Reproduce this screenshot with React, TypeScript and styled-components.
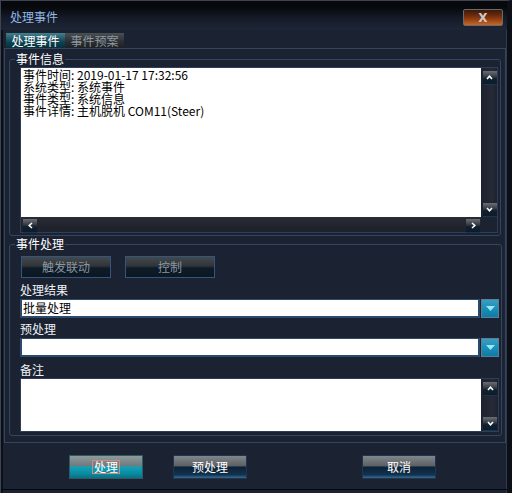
import React from "react";
import styled, { createGlobalStyle, css } from "styled-components";

const GlobalStyle = createGlobalStyle`
  html, body {
    margin: 0;
    padding: 0;
    background: #0b0e15;
  }
  * {
    box-sizing: border-box;
  }
`;

const FONT = `"Noto Sans CJK SC", "Liberation Sans", sans-serif`;

// 窗口外框
const Window = styled.div`
  width: 512px;
  height: 493px;
  display: flex;
  flex-direction: column;
  background: #1b2231;
  border-top: 1px solid #3c4456;
  border-left: 1px solid #3c4456;
  border-right: 5px solid #0c0f16;
  box-shadow: inset 2px 0 0 #0c0f16, inset -1px 0 0 #2e3a50;
  font-family: ${FONT};
  font-size: 12px;
  overflow: hidden;
`;

const TitleBar = styled.div`
  height: 29px;
  display: flex;
  align-items: center;
  justify-content: space-between;
  padding: 0 4px 0 9px;
  background: linear-gradient(#06080c 0%, #06080c 20%, #151b28 60%, #1e2637 100%);
`;

const TitleText = styled.span`
  color: #93b8e6;
  font-size: 12px;
  line-height: 14px;
  margin-top: 2px;
`;

const CloseButton = styled.div`
  width: 40px;
  height: 17px;
  margin-top: 4px;
  border: 1px solid #6b6a68;
  border-radius: 2px;
  background: linear-gradient(#3a1a0c 0%, #6a2a0c 35%, #8e3e10 60%, #c8662a 100%);
  display: flex;
  align-items: center;
  justify-content: center;
  color: #cfcac6;
  font-family: "DejaVu Sans", sans-serif;
  font-weight: bold;
  font-size: 12px;
  line-height: 12px;
`;

const TabRow = styled.div`
  display: flex;
  padding: 3px 0 0 5px;
  height: 18px;
`;

const Tab = styled.div<{ $active?: boolean }>`
  width: 59px;
  height: 15px;
  display: flex;
  align-items: center;
  justify-content: center;
  line-height: 14px;
  ${(p) =>
    p.$active
      ? css`
          background: linear-gradient(#467f8c, #0d4352 60%, #06303c);
          color: #ffffff;
        `
      : css`
          background: linear-gradient(#4a4f54, #2a2e33 60%, #1d2125);
          color: #8f979e;
        `}
`;

const Panel = styled.div`
  margin-left: 3px;
  width: 502px;
  height: 395px;
  border: 1px solid #34455f;
  padding: 3px 4px 0 4px;
  display: flex;
  flex-direction: column;
  gap: 1px;
`;

const Group = styled.fieldset<{ $bottom: number }>`
  margin: 0;
  border: 1px solid #34455f;
  border-radius: 3px;
  padding: 0 2px ${(p) => p.$bottom}px 10px;
  display: flex;
  flex-direction: column;
`;

const GroupTitle = styled.legend`
  color: #ffffff;
  font-size: 12px;
  line-height: 14px;
  padding: 0 1px;
  margin-left: -5px;
`;

// 文本区外框 (带滚动条)
const TextFrame = styled.div<{ $rows: string; $cols: string }>`
  border: 1px solid #2f3e58;
  display: grid;
  grid-template-columns: ${(p) => p.$cols};
  grid-template-rows: ${(p) => p.$rows};
  margin-top: 1px;
`;

const WhiteArea = styled.div`
  background: #ffffff;
  color: #000000;
  padding: 1px 2px;
  font-size: 12px;
  line-height: 12px;
  white-space: pre;
`;

const VScroll = styled.div`
  display: flex;
  flex-direction: column;
  justify-content: space-between;
  align-items: center;
  padding: 3px 0 1px 1px;
  background: linear-gradient(90deg, #1e2230, #262a36 70%, #1b2231);
`;

const HScroll = styled.div`
  display: flex;
  justify-content: space-between;
  align-items: center;
  padding: 1px 1px 0 2px;
  background: linear-gradient(#2a2c34, #20232c 70%, #1b2231);
`;

const ScrollButton = styled.div`
  width: 14px;
  height: 13px;
  background: linear-gradient(#6a6e74, #3b4048 40%, #10202e 60%, #0d1c2a);
  display: flex;
  align-items: center;
  justify-content: center;
  box-shadow: 0 1px 0 #1a3550;
`;

const Corner = styled.div`
  background: #1b2231;
`;

const ButtonRow = styled.div`
  display: flex;
  gap: 14px;
  padding: 5px 0 0 1px;
`;

const SmallButton = styled.div`
  width: 90px;
  height: 22px;
  border: 1px solid #36557a;
  background: linear-gradient(#44494d, #2f3438 45%, #0f1b27 55%, #0b1824);
  color: #8996a2;
  display: flex;
  align-items: center;
  justify-content: center;
  line-height: 14px;
`;

const FieldLabel = styled.div<{ $top: number }>`
  color: #eef2f6;
  line-height: 14px;
  margin-top: ${(p) => p.$top}px;
`;

const Combo = styled.div`
  display: flex;
  height: 19px;
  margin-top: 2px;
`;

const ComboField = styled.div`
  width: 460px;
  background: #ffffff;
  border: 2px solid #2a4a6e;
  border-top-width: 1px;
  color: #000000;
  line-height: 15px;
  padding-left: 1px;
`;

const ComboButton = styled.div`
  width: 18px;
  margin-left: 1px;
  border: 1px solid #5a7f96;
  background: linear-gradient(#3a9ec0, #1990b8 50%, #0e7ba6);
  display: flex;
  align-items: center;
  justify-content: center;
`;

const Footer = styled.div`
  display: flex;
  padding: 12px 0 0 68px;
`;

const DialogButton = styled.div<{ $primary?: boolean; $gap: number }>`
  width: 74px;
  height: 24px;
  margin-left: ${(p) => p.$gap}px;
  display: flex;
  align-items: center;
  justify-content: center;
  color: #ffffff;
  font-size: 12px;
  line-height: 14px;
  ${(p) =>
    p.$primary
      ? css`
          border: 1px solid #2e5a66;
          background: linear-gradient(#8f9a9c, #6d7a7e 45%, #0fa3ba 50%, #0a8aa0 80%, #0b6f84);
        `
      : css`
          border: 1px solid #1e3550;
          background: linear-gradient(#80868a, #5a6064 45%, #0c2236 50%, #11324e 85%, #3a6a90);
        `}
`;

const FocusRect = styled.span`
  border: 1px solid #d88a78;
  padding: 0 1px;
  line-height: 12px;
`;

const BottomLine = styled.div`
  margin-top: auto;
  height: 4px;
  border-top: 1px solid #05070b;
`;

const Chevron: React.FC<{ dir: "up" | "down" | "left" | "right" }> = ({ dir }) => {
  const rot = { up: 0, down: 180, left: 270, right: 90 }[dir];
  return (
    <svg width="7" height="5" viewBox="0 0 7 5" style={{ transform: `rotate(${rot}deg)` }}>
      <path d="M1 4 L3.5 1.2 L6 4" stroke="#ffffff" strokeWidth="1.6" fill="none" />
    </svg>
  );
};

const DropArrow = () => (
  <svg width="9" height="5" viewBox="0 0 9 5">
    <path d="M0 0 H9 L4.5 5 Z" fill="#9ee6f6" />
  </svg>
);

const eventLines = [
  "事件时间: 2019-01-17 17:32:56",
  "系统类型: 系统事件",
  "事件类型: 系统信息",
  "事件详情: 主机脱机 COM11(Steer)",
];

const App: React.FC = () => {
  return (
    <>
      <GlobalStyle />
      <Window>
        <TitleBar>
          <TitleText>处理事件</TitleText>
          <CloseButton>X</CloseButton>
        </TitleBar>
        <TabRow>
          <Tab $active>处理事件</Tab>
          <Tab>事件预案</Tab>
        </TabRow>
        <Panel>
          <Group $bottom={2}>
            <GroupTitle>事件信息</GroupTitle>
            <TextFrame $cols="460px 1fr" $rows="149px 15px">
              <WhiteArea>{eventLines.join("\n")}</WhiteArea>
              <VScroll>
                <ScrollButton>
                  <Chevron dir="up" />
                </ScrollButton>
                <ScrollButton>
                  <Chevron dir="down" />
                </ScrollButton>
              </VScroll>
              <HScroll>
                <ScrollButton>
                  <Chevron dir="left" />
                </ScrollButton>
                <ScrollButton>
                  <Chevron dir="right" />
                </ScrollButton>
              </HScroll>
              <Corner />
            </TextFrame>
          </Group>
          <Group $bottom={3}>
            <GroupTitle>事件处理</GroupTitle>
            <ButtonRow>
              <SmallButton>触发联动</SmallButton>
              <SmallButton>控制</SmallButton>
            </ButtonRow>
            <FieldLabel $top={5}>处理结果</FieldLabel>
            <Combo>
              <ComboField>批量处理</ComboField>
              <ComboButton>
                <DropArrow />
              </ComboButton>
            </Combo>
            <FieldLabel $top={4}>预处理</FieldLabel>
            <Combo>
              <ComboField />
              <ComboButton>
                <DropArrow />
              </ComboButton>
            </Combo>
            <FieldLabel $top={6}>备注</FieldLabel>
            <TextFrame $cols="460px 1fr" $rows="52px">
              <WhiteArea />
              <VScroll>
                <ScrollButton>
                  <Chevron dir="up" />
                </ScrollButton>
                <ScrollButton>
                  <Chevron dir="down" />
                </ScrollButton>
              </VScroll>
            </TextFrame>
          </Group>
        </Panel>
        <Footer>
          <DialogButton $primary $gap={0}>
            <FocusRect>处理</FocusRect>
          </DialogButton>
          <DialogButton $gap={30}>预处理</DialogButton>
          <DialogButton $gap={115}>取消</DialogButton>
        </Footer>
        <BottomLine />
      </Window>
    </>
  );
};

export default App;
